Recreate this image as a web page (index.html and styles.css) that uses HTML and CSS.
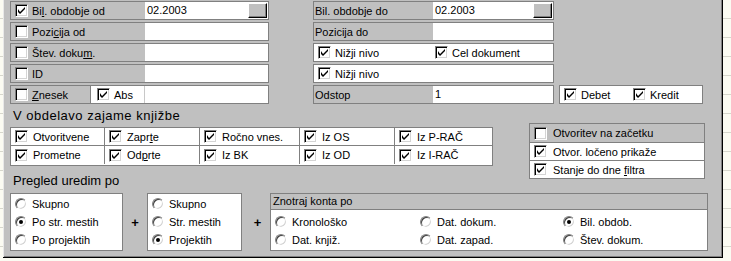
FILE: index.html
```html
<!DOCTYPE html>
<html lang="sl">
<head>
    <meta charset="UTF-8">
    <title>Filter knjižb</title>
    <link rel="stylesheet" href="styles.css">
</head>
<body>
    <div class="panel">
        <div class="top">
            <div class="col col-left">
                <div class="row">
                    <span class="lbl"><i class="cb"><svg width="7" height="7" viewBox="0 0 7 7"><path d="M0 2v3l2 2 5-5V0L2 5z"/></svg></i><span>Bi<u>l</u>. obdobje od</span></span>
                    <span class="val">02.2003<b class="btn"></b></span>
                </div>
                <div class="row">
                    <span class="lbl"><i class="cb"></i><span>Pozi<u>c</u>ija od</span></span>
                    <span class="val"></span>
                </div>
                <div class="row">
                    <span class="lbl"><i class="cb"></i><span>Štev. doku<u>m</u>.</span></span>
                    <span class="val"></span>
                </div>
                <div class="row">
                    <span class="lbl"><i class="cb"></i>ID</span>
                    <span class="val"></span>
                </div>
                <div class="row">
                    <span class="lbl lbl-short"><i class="cb"></i><span><u>Z</u>nesek</span></span>
                    <span class="abs"><i class="cb"><svg width="7" height="7" viewBox="0 0 7 7"><path d="M0 2v3l2 2 5-5V0L2 5z"/></svg></i>Abs</span>
                    <span class="val"></span>
                </div>
            </div>

            <div class="col col-right">
                <div class="row">
                    <span class="lbl lbl-plain">Bil. obdobje do</span>
                    <span class="val">02.2003<b class="btn"></b></span>
                </div>
                <div class="row">
                    <span class="lbl lbl-plain">Pozicija do</span>
                    <span class="val"></span>
                </div>
                <div class="row row-white">
                    <span class="opt opt-wide"><i class="cb"><svg width="7" height="7" viewBox="0 0 7 7"><path d="M0 2v3l2 2 5-5V0L2 5z"/></svg></i>Nižji nivo</span>
                    <span class="opt"><i class="cb"><svg width="7" height="7" viewBox="0 0 7 7"><path d="M0 2v3l2 2 5-5V0L2 5z"/></svg></i>Cel dokument</span>
                </div>
                <div class="row row-white">
                    <span class="opt"><i class="cb"><svg width="7" height="7" viewBox="0 0 7 7"><path d="M0 2v3l2 2 5-5V0L2 5z"/></svg></i>Nižji nivo</span>
                </div>
                <div class="row">
                    <span class="lbl lbl-plain">Odstop</span>
                    <span class="val">1</span>
                </div>
            </div>

            <div class="col col-extra">
                <div class="row row-white">
                    <span class="opt opt-dk"><i class="cb"><svg width="7" height="7" viewBox="0 0 7 7"><path d="M0 2v3l2 2 5-5V0L2 5z"/></svg></i>Debet</span>
                    <span class="opt"><i class="cb"><svg width="7" height="7" viewBox="0 0 7 7"><path d="M0 2v3l2 2 5-5V0L2 5z"/></svg></i>Kredit</span>
                </div>
            </div>
        </div>

        <div class="mid">
            <div class="heading heading-wide">V obdelavo zajame knjižbe</div>
            <div class="cgrid">
                <span><i class="cb"><svg width="7" height="7" viewBox="0 0 7 7"><path d="M0 2v3l2 2 5-5V0L2 5z"/></svg></i>Otvoritvene</span>
                <span><i class="cb"><svg width="7" height="7" viewBox="0 0 7 7"><path d="M0 2v3l2 2 5-5V0L2 5z"/></svg></i><span>Zapr<u>t</u>e</span></span>
                <span><i class="cb"><svg width="7" height="7" viewBox="0 0 7 7"><path d="M0 2v3l2 2 5-5V0L2 5z"/></svg></i>Ročno vnes.</span>
                <span><i class="cb"><svg width="7" height="7" viewBox="0 0 7 7"><path d="M0 2v3l2 2 5-5V0L2 5z"/></svg></i>Iz OS</span>
                <span><i class="cb"><svg width="7" height="7" viewBox="0 0 7 7"><path d="M0 2v3l2 2 5-5V0L2 5z"/></svg></i>Iz P-RAČ</span>
                <span><i class="cb"><svg width="7" height="7" viewBox="0 0 7 7"><path d="M0 2v3l2 2 5-5V0L2 5z"/></svg></i>Prometne</span>
                <span><i class="cb"><svg width="7" height="7" viewBox="0 0 7 7"><path d="M0 2v3l2 2 5-5V0L2 5z"/></svg></i><span>Od<u>p</u>rte</span></span>
                <span><i class="cb"><svg width="7" height="7" viewBox="0 0 7 7"><path d="M0 2v3l2 2 5-5V0L2 5z"/></svg></i>Iz BK</span>
                <span><i class="cb"><svg width="7" height="7" viewBox="0 0 7 7"><path d="M0 2v3l2 2 5-5V0L2 5z"/></svg></i>Iz OD</span>
                <span><i class="cb"><svg width="7" height="7" viewBox="0 0 7 7"><path d="M0 2v3l2 2 5-5V0L2 5z"/></svg></i>Iz I-RAČ</span>
            </div>
            <div class="heading heading-low">Pregled uredim po</div>

            <div class="flags">
                <span class="flag flag-grey"><i class="cb"></i>Otvoritev na začetku</span>
                <span class="flag"><i class="cb"><svg width="7" height="7" viewBox="0 0 7 7"><path d="M0 2v3l2 2 5-5V0L2 5z"/></svg></i>Otvor. ločeno prikaže</span>
                <span class="flag"><i class="cb"><svg width="7" height="7" viewBox="0 0 7 7"><path d="M0 2v3l2 2 5-5V0L2 5z"/></svg></i><span>Stanje do dne <u>f</u>iltra</span></span>
            </div>
        </div>

        <div class="sort">
            <div class="rgroup rgroup-1">
                <span class="ropt"><i class="rb"></i>Skupno</span>
                <span class="ropt"><i class="rb on"></i>Po str. mestih</span>
                <span class="ropt"><i class="rb"></i>Po projektih</span>
            </div>
            <span class="plus">+</span>
            <div class="rgroup rgroup-2">
                <span class="ropt"><i class="rb"></i>Skupno</span>
                <span class="ropt"><i class="rb"></i>Str. mestih</span>
                <span class="ropt"><i class="rb on"></i>Projektih</span>
            </div>
            <span class="plus plus-2">+</span>
            <div class="rgroup rgroup-3">
                <div class="rhead">Znotraj konta po</div>
                <div class="rbody">
                    <span class="ropt"><i class="rb"></i>Kronološko</span>
                    <span class="ropt"><i class="rb"></i>Dat. dokum.</span>
                    <span class="ropt"><i class="rb on"></i>Bil. obdob.</span>
                    <span class="ropt"><i class="rb"></i>Dat. knjiž.</span>
                    <span class="ropt"><i class="rb"></i>Dat. zapad.</span>
                    <span class="ropt"><i class="rb"></i>Štev. dokum.</span>
                </div>
            </div>
        </div>
    </div>
</body>
</html>
```

FILE: styles.css
```css
body {
    margin: 0;
    height: 261px;
    overflow: hidden;
    font-family: "Liberation Sans", Arial, sans-serif;
    font-size: 11px;
    color: #000;
    background-color: #fbfbf2;
    background-image: repeating-linear-gradient(to bottom, transparent 0, transparent 18px, #d6d6cc 18px, #d6d6cc 19px);
}
u {
    text-decoration-thickness: 1px;
    text-underline-offset: 1px;
}
.panel {
    margin-left: 3px;
    width: 720px;
    height: 258px;
    box-sizing: border-box;
    padding-left: 7px;
    background: #c0c0c0;
    border-right: 1px solid #000;
    border-bottom: 1px solid #000;
    box-shadow: inset 1px 0 #e8e8e8, inset -1px -1px #808080;
}
.top {
    display: flex;
    padding-top: 1px;
}
.col {
    display: flex;
    flex-direction: column;
    gap: 2px;
}
.col-left {
    width: 259px;
}
.col-right {
    width: 241px;
    margin-left: 44px;
}
.col-extra {
    width: 144px;
    margin-left: 5px;
    justify-content: flex-end;
}
.row {
    display: flex;
    height: 19px;
    box-sizing: border-box;
    border: 1px solid #808080;
    background: #fff;
}
.row-white {
    align-items: center;
    padding-left: 4px;
}
.lbl {
    display: flex;
    align-items: center;
    width: 134px;
    padding-left: 4px;
    box-sizing: border-box;
    background: #c0c0c0;
    white-space: nowrap;
}
.lbl-short {
    width: 79px;
}
.lbl-plain {
    width: 119px;
    padding-left: 1px;
}
.abs {
    display: flex;
    align-items: center;
    width: 55px;
    box-sizing: border-box;
    padding-left: 6px;
    border-left: 1px solid #808080;
    border-right: 1px solid #c8c8c8;
}
.val {
    position: relative;
    flex: 1;
    padding-left: 2px;
    line-height: 17px;
}
.btn {
    position: absolute;
    top: 1px;
    right: 1px;
    width: 19px;
    height: 15px;
    box-sizing: border-box;
    background: #c0c0c0;
    border: 1px solid;
    border-color: #fff #000 #000 #fff;
    box-shadow: inset -1px -1px #808080;
}
.opt {
    display: flex;
    align-items: center;
    white-space: nowrap;
}
.opt-wide {
    width: 117px;
}
.opt-dk {
    width: 69px;
}
.cb {
    display: inline-flex;
    align-items: center;
    justify-content: center;
    flex: none;
    width: 13px;
    height: 13px;
    box-sizing: border-box;
    margin-right: 4px;
    background: #fff;
    border: 1px solid;
    border-color: #808080 #fff #fff #808080;
    box-shadow: inset 1px 1px #000, inset -1px -1px #d4d4d4;
}
.cb svg {
    display: block;
    fill: #000;
}

.mid {
    display: grid;
    grid-template-columns: 483px 176px;
    grid-template-rows: 20px 39px 27px;
    column-gap: 36px;
    margin-top: 3px;
}
.heading {
    grid-column: 1;
    padding-left: 3px;
    font-size: 13px;
    line-height: 16px;
    padding-top: 1px;
}
.heading-wide {
    letter-spacing: 0.5px;
}
.heading-low {
    padding-top: 7px;
}
.cgrid {
    grid-column: 1;
    display: grid;
    grid-template-columns: 94px 95px 100px 95px 1fr;
    grid-template-rows: 18px 18px;
    border: 1px solid #808080;
    background: #fff;
}
.cgrid > span {
    display: flex;
    align-items: center;
    padding-left: 4px;
    border-right: 1px solid #808080;
    white-space: nowrap;
}
.cgrid > span:nth-child(-n+5) {
    border-bottom: 1px solid #808080;
}
.cgrid > span:nth-child(5n) {
    border-right: none;
}
.cgrid .cb {
    margin-right: 5px;
}
.flags {
    grid-column: 2;
    grid-row: 1 / 4;
    align-self: start;
    margin-top: 16px;
    display: flex;
    flex-direction: column;
    border: 1px solid #808080;
    background: #fff;
}
.flag {
    display: flex;
    align-items: center;
    height: 17px;
    padding-left: 4px;
    border-top: 1px solid #808080;
    white-space: nowrap;
}
.flag:first-child {
    border-top: none;
    height: 18px;
}
.flag-grey {
    background: #c0c0c0;
}
.flag .cb {
    margin-right: 6px;
}

.sort {
    display: flex;
    align-items: center;
    height: 58px;
}
.rgroup {
    align-self: stretch;
    box-sizing: border-box;
    border: 1px solid #808080;
    background: #fff;
}
.rgroup-1,
.rgroup-2 {
    display: flex;
    flex-direction: column;
    padding-top: 1px;
}
.rgroup-1 {
    width: 113px;
}
.rgroup-2 {
    width: 95px;
}
.rgroup-3 {
    flex: 1;
    max-width: 438px;
}
.plus {
    width: 24px;
    text-align: center;
    font-size: 13px;
    font-weight: bold;
}
.plus-2 {
    width: 28px;
    padding-left: 3px;
    box-sizing: border-box;
}
.ropt {
    display: flex;
    align-items: center;
    height: 18px;
    padding-left: 4px;
    white-space: nowrap;
}
.rhead {
    height: 15px;
    line-height: 15px;
    padding-left: 2px;
    background: #c0c0c0;
    border-bottom: 1px solid #808080;
}
.rbody {
    display: grid;
    grid-template-columns: 145px 143px 1fr;
    padding-top: 3px;
}
.rb {
    position: relative;
    flex: none;
    width: 12px;
    height: 12px;
    box-sizing: border-box;
    margin-right: 5px;
    border-radius: 50%;
    background: #fff;
    border: 1px solid;
    border-color: #808080 #fff #fff #808080;
    box-shadow: inset 1px 1px #404040, inset -1px -1px #d4d4d4;
}
.rb.on::after {
    content: "";
    position: absolute;
    left: 3px;
    top: 3px;
    width: 4px;
    height: 4px;
    border-radius: 50%;
    background: #000;
}
```
